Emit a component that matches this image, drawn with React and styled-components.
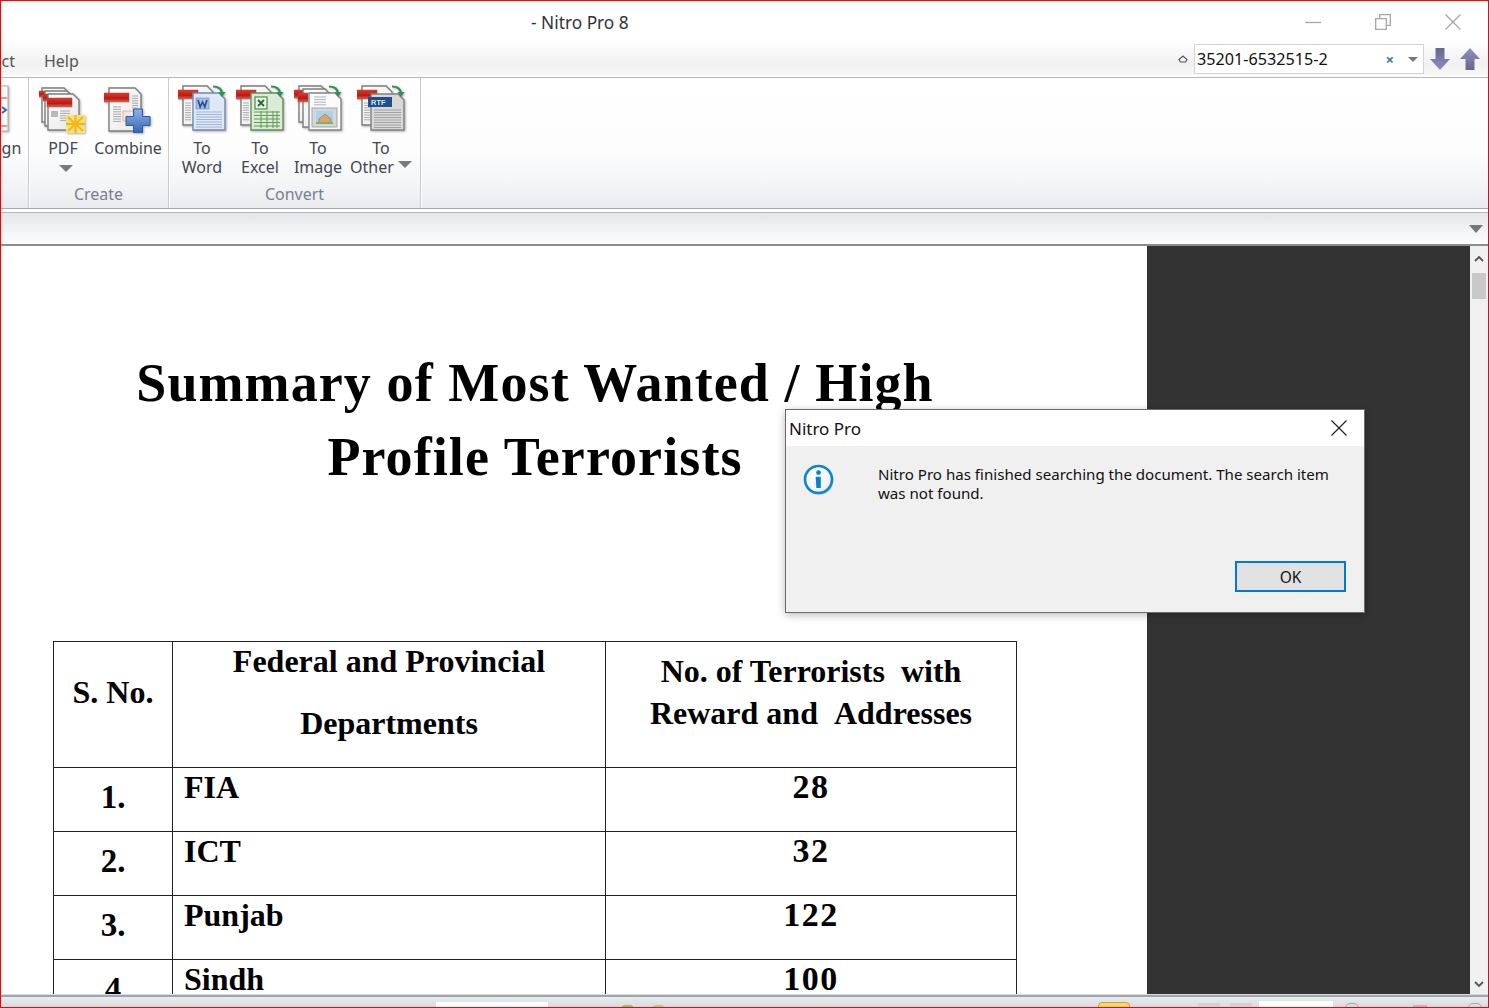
import React from 'react'
import styled, { createGlobalStyle } from 'styled-components'

const GlobalStyle = createGlobalStyle`
  html, body { margin: 0; padding: 0; background: #fff; overflow: hidden; }
  * { box-sizing: border-box; }
`

const UI_FONT = `"Noto Sans", "Open Sans", sans-serif`
const DOC_FONT = `"Liberation Serif", "Times New Roman", serif`

const Window = styled.div`
  width: 1489px;
  height: 1008px;
  border: 1px solid #f00;
  position: relative;
  overflow: hidden;
  display: flex;
  flex-direction: column;
  background: #fff;
  font-family: ${UI_FONT};
`

const Header = styled.div`
  height: 77px;
  flex: none;
  display: flex;
  flex-direction: column;
  border-bottom: 1px solid #b4b8bb;
  background: linear-gradient(#fff 0, #fff 38px, #f1f1f1 62px, #f6f6f6 72px, #fdfdfd 100%);
`

const TitleBar = styled.div`
  height: 42px;
  flex: none;
  display: flex;
  align-items: center;
  justify-content: space-between;
`

const TitleText = styled.div`
  margin-left: 530px;
  font-size: 17.3px;
  color: #333;
`

const WindowButtons = styled.div`
  display: flex;
  align-items: center;
  gap: 54px;
  padding-right: 27px;
  height: 100%;
`

const TabRow = styled.div`
  flex: 1;
  display: flex;
  align-items: center;
  justify-content: space-between;
`

const Tabs = styled.div`
  display: flex;
  align-items: center;
  gap: 29px;
  margin-left: -40px;
  padding-top: 2px;
`

const Tab = styled.span`
  font-size: 16px;
  color: #555;
`

const SearchArea = styled.div`
  display: flex;
  align-items: center;
  padding: 0 8px 2px 0;
  height: 100%;
`

const SearchBox = styled.div`
  width: 230px;
  height: 30px;
  margin: 0 6px 0 6px;
  background: #fff;
  border: 1px solid #d2d4d6;
  display: flex;
  align-items: center;
  padding: 0 5px 0 2px;
  font-size: 16.2px;
  color: #111;
`

const SearchValue = styled.span`
  flex: 1;
`

const ClearMark = styled.span`
  color: #3c78a8;
  font-size: 15px;
  font-weight: 700;
  margin-right: 14px;
  line-height: 1;
`

const FindArrows = styled.div`
  display: flex;
  gap: 10px;
`

const Ribbon = styled.div`
  height: 131px;
  flex: none;
  display: flex;
  border-bottom: 1px solid #a3a8ac;
  background: linear-gradient(#fff 0, #fdfdfd 70px, #f4f5f7 105px, #e9ebef 100%);
`

const RibbonGroup = styled.div`
  width: ${p => p.$width}px;
  flex: none;
  display: flex;
  flex-direction: column;
  align-items: center;
  border-right: 1px solid #c8ccd2;
  box-shadow: 1px 0 0 #fff;
  padding-top: 2px;
  overflow: hidden;
`

const GroupButtons = styled.div`
  flex: 1;
  align-self: stretch;
  display: flex;
  justify-content: ${p => p.$end ? 'flex-end' : 'flex-start'};
  padding-left: ${p => p.$inset || 0}px;
  padding-right: ${p => p.$end ? 5 : 0}px;
`

const GroupLabel = styled.div`
  height: 26px;
  font-size: 16px;
  line-height: 24px;
  color: #76818f;
`

const ToolButton = styled.div`
  width: ${p => p.$width}px;
  flex: none;
  display: flex;
  flex-direction: column;
  align-items: center;
`

const IconSlot = styled.div`
  height: 53px;
  display: flex;
  align-items: flex-end;
  margin-bottom: 6px;
  align-self: ${p => p.$clipped ? 'flex-end' : 'auto'};
  margin-right: ${p => p.$clipped ? 14 : 0}px;
`

const ToolLabel = styled.div`
  font-size: 16px;
  line-height: 19px;
  color: #3f4650;
  text-align: center;
  white-space: nowrap;
`

const DownArrow = styled.span`
  display: ${p => p.$block ? 'block' : 'inline-block'};
  flex: none;
  width: 0;
  height: 0;
  border-left: ${p => p.$size || 7}px solid transparent;
  border-right: ${p => p.$size || 7}px solid transparent;
  border-top: ${p => p.$size || 7}px solid #7a7a7a;
  margin: ${p => p.$block ? '7px 0 0 6px' : p.$size ? '0' : '0 0 5px 4px'};
`

const SubBar = styled.div`
  flex: none;
  height: 34px;
  margin-top: 3px;
  border-top: 1px solid #b4b8bc;
  border-bottom: 2px solid #8a8c8e;
  background: linear-gradient(#e3e6ea, #fdfdfd);
  display: flex;
  align-items: center;
  justify-content: flex-end;
  padding-right: 5px;
`

const SubArrow = styled.span`
  width: 0;
  height: 0;
  border-left: 7px solid transparent;
  border-right: 7px solid transparent;
  border-top: 8px solid #777;
`

const Workspace = styled.div`
  flex: 1;
  min-height: 0;
  display: flex;
  border-bottom: 1px solid #dcdcdc;
`

const PageArea = styled.div`
  width: 1146px;
  flex: none;
  overflow: hidden;
  padding-top: 100px;
  color: #000;
  font-family: ${DOC_FONT};
  font-weight: 700;
`

const Heading = styled.h1`
  margin: 0;
  width: 1068px;
  text-align: center;
  font-size: 54px;
  line-height: 74px;
  letter-spacing: 1.1px;
  font-weight: 700;
`

const SummaryTable = styled.div`
  margin: 147px 0 0 52px;
  width: 964px;
  display: grid;
  grid-template-columns: 119px 433px 411px;
  grid-template-rows: 126px repeat(4, 64px);
  border-top: 1px solid #222;
  border-left: 1px solid #222;
`

const Cell = styled.div`
  border-right: 1px solid #222;
  border-bottom: 1px solid #222;
  font-size: ${p => p.$size || 32}px;
  line-height: ${p => p.$line || 36}px;
  letter-spacing: ${p => p.$spacing || 0}px;
  padding-top: ${p => p.$top || 0}px;
  padding-left: ${p => p.$left || 0}px;
  text-align: ${p => p.$left ? 'left' : 'center'};
`

const HeaderLine = styled.div`
  margin-bottom: ${p => p.$gap || 0}px;
`

const DarkGutter = styled.div`
  flex: 1;
  background: #333;
`

const ScrollTrack = styled.div`
  width: 18px;
  flex: none;
  background: #f0f0f0;
  display: flex;
  flex-direction: column;
  align-items: center;
  justify-content: space-between;
  padding: 9px 0 6px;
`

const ScrollThumb = styled.div`
  width: 14px;
  height: 26px;
  margin-top: 11px;
  background: #c9c9c9;
`

const ScrollTop = styled.div`
  display: flex;
  flex-direction: column;
  align-items: center;
`

const StatusBar = styled.div`
  flex: none;
  height: 12px;
  border-top: 2px solid #9fa6ab;
  background: linear-gradient(#e9ebee, #d8dbe0);
  display: flex;
  align-items: flex-start;
  overflow: hidden;
`

const StatusBox = styled.div`
  width: ${p => p.$width}px;
  height: 10px;
  margin-top: ${p => p.$top || 0}px;
  margin-left: ${p => p.$left}px;
  background: ${p => p.$bg || '#fff'};
  border: 1px solid ${p => p.$edge || '#fff'};
  border-radius: ${p => p.$radius || 0}px;
  flex: none;
`

const Dialog = styled.div`
  position: absolute;
  left: 784px;
  top: 408px;
  width: 580px;
  height: 204px;
  border: 1px solid #6a6a6a;
  background: #f0f0f0;
  box-shadow: 0 2px 8px rgba(0, 0, 0, 0.28);
  display: flex;
  flex-direction: column;
  z-index: 2;
`

const DialogTitle = styled.div`
  height: 36px;
  flex: none;
  background: #fff;
  display: flex;
  align-items: center;
  justify-content: space-between;
  padding: 0 17px 0 3px;
  font-size: 17px;
  color: #111;
`

const DialogBody = styled.div`
  flex: 1;
  display: flex;
  padding: 18px 0 0 17px;
`

const DialogText = styled.div`
  width: 462px;
  margin: 1px 0 0 43px;
  font-size: 15.1px;
  line-height: 19px;
  color: #111;
`

const DialogFooter = styled.div`
  display: flex;
  justify-content: flex-end;
  padding: 0 18px 20px 0;
`

const OkButton = styled.button`
  width: 111px;
  height: 31px;
  background: #e1e1e1;
  border: 2px solid #0078d7;
  padding: 0;
  font-family: ${UI_FONT};
  font-size: 15.5px;
  color: #111;
`

const IconSvg = styled.svg`
  display: block;
  flex: none;
  filter: blur(0.35px) drop-shadow(1px 1px 1px rgba(0, 0, 0, 0.3));
`

const Defs = () => (
  <defs>
    <linearGradient id="redTab" x1="0" y1="0" x2="0" y2="1">
      <stop offset="0" stopColor="#e0392c" />
      <stop offset="0.6" stopColor="#b81a10" />
      <stop offset="1" stopColor="#d9695e" />
    </linearGradient>
    <linearGradient id="sheet" x1="0" y1="0" x2="1" y2="1">
      <stop offset="0" stopColor="#fff" />
      <stop offset="1" stopColor="#e6e6e6" />
    </linearGradient>
    <linearGradient id="plus" x1="0" y1="0" x2="0" y2="1">
      <stop offset="0" stopColor="#8fb2e6" />
      <stop offset="1" stopColor="#3266b4" />
    </linearGradient>
  </defs>
)

// a sheet with a folded top right corner
const Sheet = ({ x, y, w, h, fill = 'url(#sheet)', stroke = '#7d7d7d', width = 1.4 }) => (
  <path
    d={`M${x} ${y}h${w - 6}l6 6v${h - 6}h${-w}z`}
    fill={fill}
    stroke={stroke}
    strokeWidth={width}
  />
)

const Lines = ({ x, y, w, n, gap = 2.4, color = '#a9a9a9' }) => (
  <g stroke={color} strokeWidth="1">
    {Array.from({ length: n }, (_, i) => (
      <line key={i} x1={x} x2={x + w} y1={y + i * gap} y2={y + i * gap} />
    ))}
  </g>
)

const RedTab = ({ x, y, w, h = 8 }) => (
  <rect x={x} y={y} width={w} height={h} fill="url(#redTab)" stroke="#a8433a" strokeWidth="0.5" />
)

const GreenArrow = () => (
  <g>
    <path d="M35 1.5q8 0 9 6.5" fill="none" stroke="#2e8f5a" strokeWidth="2.2" />
    <path d="M40.5 7h7l-3.5 5z" fill="#2e8f5a" />
  </g>
)

const BackStack = () => (
  <g>
    <Sheet x={5} y={1} w={30} h={39} />
    <Lines x={7} y={18} w={6} n={8} />
    <RedTab x={0} y={5} w={20} h={9} />
  </g>
)

const IconFrame = ({ children }) => (
  <IconSvg width={48} height={48} viewBox="0 0 48 48">
    <Defs />
    {children}
  </IconSvg>
)

const PdfIcon = () => (
  <IconFrame>
    <Sheet x={3} y={3} w={28} h={34} />
    <RedTab x={0} y={6} w={9} h={6} />
    <Sheet x={6} y={6} w={28} h={35} />
    <RedTab x={4} y={9} w={10} h={7} />
    <Sheet x={9} y={9} w={31} h={36} />
    <RedTab x={8} y={13} w={25} h={9} />
    <rect x={12} y={26} width={7} height={6} fill="#b8b8b8" />
    <Lines x={21} y={26} w={10} n={5} />
    <rect x={27} y={30} width={19} height={18} fill="#f6e27a" />
    <g stroke="#f3b61f" strokeWidth="2.2">
      <line x1="36.5" y1="30" x2="36.5" y2="48" />
      <line x1="27" y1="39" x2="46" y2="39" />
      <line x1="29" y1="32" x2="44" y2="46" />
      <line x1="44" y1="32" x2="29" y2="46" />
    </g>
  </IconFrame>
)

const CombineIcon = () => (
  <IconFrame>
    <Sheet x={5} y={3} w={32} h={43} />
    <RedTab x={0} y={8} w={25} h={9} />
    <Lines x={28} y={11} w={6} n={6} />
    <Lines x={9} y={22} w={8} n={7} />
    <rect x={19} y={26} width={13} height={10} fill="#f3e6e2" stroke="#d8a9a0" strokeWidth="0.8" />
    <path
      d="M29.5 24h9v7.5H46v9h-7.5V48h-9v-7.5H22v-9h7.5z"
      fill="url(#plus)"
      stroke="#2b5a9f"
      strokeWidth="1"
    />
  </IconFrame>
)

const WordIcon = () => (
  <IconFrame>
    <BackStack />
    <Sheet x={15} y={8} w={32} h={37} fill="#dfe8f6" stroke="#7389ad" />
    <Lines x={18} y={27} w={26} n={7} gap={2.5} color="#9fb4d6" />
    <rect x={18} y={13} width={13} height={11} fill="#a8bfe2" stroke="#5f7fb5" strokeWidth="0.6" />
    <path d="M20 15l2.2 7 2.3-5 2.3 5 2.2-7" fill="none" stroke="#1f4e9e" strokeWidth="1.7" />
    <GreenArrow />
  </IconFrame>
)

const ExcelIcon = () => (
  <IconFrame>
    <BackStack />
    <Sheet x={15} y={8} w={32} h={37} fill="#dcebd6" stroke="#5f8f58" />
    <rect x={19} y={12} width={12} height={12} fill="#eef5ea" stroke="#4d8a48" strokeWidth="1.2" />
    <path d="M22 15l6 6M28 15l-6 6" stroke="#1e6b2e" strokeWidth="1.8" />
    <g stroke="#5d9a56" strokeWidth="1">
      <path d="M18 27h26M18 30.5h26M18 34h26M18 37.5h26M18 41h26" />
      <path d="M25 26v17M31 26v17M37 26v17M41 26v17" />
    </g>
    <GreenArrow />
  </IconFrame>
)

const ImageIcon = () => (
  <IconFrame>
    <Sheet x={5} y={1} w={28} h={36} />
    <RedTab x={0} y={5} w={9} h={8} />
    <Sheet x={9} y={4} w={28} h={38} />
    <RedTab x={4} y={8} w={10} h={9} />
    <Sheet x={15} y={8} w={32} h={37} fill="#fafafa" stroke="#858585" />
    <Lines x={20} y={12} w={12} n={4} gap={2.6} color="#a8b4c6" />
    <rect x={18} y={23} width={25} height={19} fill="#d2d7dc" stroke="#a5a5a5" strokeWidth="1" />
    <rect x={22} y={26} width={17} height={13} fill="#a9d3ea" />
    <path d="M25 34l6-5 6 5v4h-12z" fill="#d9a56b" stroke="#8a6a44" strokeWidth="0.6" />
    <path d="M22 39h17v-2h-17z" fill="#7fb06a" />
    <GreenArrow />
  </IconFrame>
)

const OtherIcon = () => (
  <IconFrame>
    <BackStack />
    <Sheet x={14} y={9} w={33} h={36} fill="#d8d8d8" stroke="#808080" />
    <Lines x={17} y={25} w={27} n={8} gap={2.5} color="#a2a2a2" />
    <rect x={11} y={12} width={24} height={10} fill="#1f4f8f" />
    <text x={14} y={20} fontSize="7.5" fontWeight="700" fill="#dfe8f5" fontFamily="Liberation Sans, sans-serif">RTF</text>
    <GreenArrow />
  </IconFrame>
)

const PartialIcon = () => (
  <IconSvg width={8} height={48} viewBox="0 0 8 48">
    <rect x="-10" y="1" width="17" height="45" fill="#fafafa" stroke="#aaa" />
    <path d="M1 22l4 3-4 3" stroke="#2a6db5" strokeWidth="2" fill="none" />
    <path d="M0 13h6" stroke="#c33" strokeWidth="1" />
    <path d="M0 41h6" stroke="#c33" strokeWidth="1" />
  </IconSvg>
)

const LineIcon = styled.svg.attrs(p => ({
  width: p.$w,
  height: p.$h,
  viewBox: `0 0 ${p.$w} ${p.$h}`,
  fill: 'none',
}))`
  display: block;
  flex: none;
  stroke: ${p => p.$stroke || '#a6a6a6'};
  stroke-width: ${p => p.$sw || 1.3};
`

const FindSvg = styled.svg`
  display: block;
  flex: none;
  transform: ${p => p.$up ? 'none' : 'scaleY(-1)'};
`

const FindArrow = ({ up }) => (
  <FindSvg $up={up} width={20} height={22} viewBox="0 0 20 22">
    <defs>
      <linearGradient id="findArrow" x1="0" y1="0" x2="0" y2="1">
        <stop offset="0" stopColor="#8f8fc0" />
        <stop offset="1" stopColor="#6a6590" />
      </linearGradient>
    </defs>
    <path d="M10 0L20 11H14.5V22H5.5V11H0z" fill="url(#findArrow)" />
  </FindSvg>
)

const InfoSvg = styled.svg`
  display: block;
  flex: none;
`

const InfoIcon = () => (
  <InfoSvg width={32} height={32} viewBox="0 0 32 32">
    <defs>
      <radialGradient id="infoFill" cx="0.4" cy="0.3" r="0.8">
        <stop offset="0" stopColor="#fff" />
        <stop offset="0.7" stopColor="#eef6fc" />
        <stop offset="1" stopColor="#bcdcf2" />
      </radialGradient>
    </defs>
    <circle cx="16" cy="16.5" r="14.5" fill="#9a9a9a" opacity="0.35" />
    <circle cx="15.5" cy="15.5" r="13.5" fill="url(#infoFill)" stroke="#0f84c8" strokeWidth="2.6" />
    <circle cx="15.5" cy="8.6" r="2.4" fill="#0f7fc4" />
    <path d="M12.6 12.8h5.2v11.2h-4.4z" fill="#0f7fc4" />
  </InfoSvg>
)

const rows = [
  ['1.', 'FIA', '28'],
  ['2.', 'ICT', '32'],
  ['3.', 'Punjab', '122'],
  ['4', 'Sindh', '100'],
]

const App = () => {
  return (
    <>
      <GlobalStyle />
      <Window>
        <Header>
          <TitleBar>
            <TitleText>- Nitro Pro 8</TitleText>
            <WindowButtons>
              <LineIcon $w={16} $h={16}><path d="M0 8.5h16" /></LineIcon>
              <LineIcon $w={16} $h={16}>
                <path d="M.7 4.7h10.6v10.6H.7z" />
                <path d="M4.7 4.7V.7h10.6v10.6h-4" />
              </LineIcon>
              <LineIcon $w={16} $h={16}><path d="M.5.5l15 15M15.5.5l-15 15" /></LineIcon>
            </WindowButtons>
          </TitleBar>
          <TabRow>
            <Tabs>
              <Tab>Protect</Tab>
              <Tab>Help</Tab>
            </Tabs>
            <SearchArea>
              <LineIcon $w={10} $h={8} $stroke="#555" $sw={1.1}>
                <path d="M1 4.5L5 1l4 3.5L7.5 7h-5z" />
              </LineIcon>
              <SearchBox>
                <SearchValue>35201-6532515-2</SearchValue>
                <ClearMark>×</ClearMark>
                <DownArrow $size={5} />
              </SearchBox>
              <FindArrows>
                <FindArrow />
                <FindArrow up />
              </FindArrows>
            </SearchArea>
          </TabRow>
        </Header>

        <Ribbon>
          <RibbonGroup $width={28}>
            <GroupButtons $end>
              <ToolButton $width={36}>
                <IconSlot $clipped><PartialIcon /></IconSlot>
                <ToolLabel>Sign</ToolLabel>
              </ToolButton>
            </GroupButtons>
          </RibbonGroup>
          <RibbonGroup $width={140}>
            <GroupButtons $inset={4}>
              <ToolButton $width={60}>
                <IconSlot><PdfIcon /></IconSlot>
                <ToolLabel>PDF</ToolLabel>
                <DownArrow $block />
              </ToolButton>
              <ToolButton $width={70}>
                <IconSlot><CombineIcon /></IconSlot>
                <ToolLabel>Combine</ToolLabel>
              </ToolButton>
            </GroupButtons>
            <GroupLabel>Create</GroupLabel>
          </RibbonGroup>
          <RibbonGroup $width={252}>
            <GroupButtons $inset={4}>
              <ToolButton $width={58}>
                <IconSlot><WordIcon /></IconSlot>
                <ToolLabel>To<br />Word</ToolLabel>
              </ToolButton>
              <ToolButton $width={58}>
                <IconSlot><ExcelIcon /></IconSlot>
                <ToolLabel>To<br />Excel</ToolLabel>
              </ToolButton>
              <ToolButton $width={58}>
                <IconSlot><ImageIcon /></IconSlot>
                <ToolLabel>To<br />Image</ToolLabel>
              </ToolButton>
              <ToolButton $width={68}>
                <IconSlot><OtherIcon /></IconSlot>
                <ToolLabel>To<br />Other<DownArrow /></ToolLabel>
              </ToolButton>
            </GroupButtons>
            <GroupLabel>Convert</GroupLabel>
          </RibbonGroup>
        </Ribbon>

        <SubBar><SubArrow /></SubBar>

        <Workspace>
          <PageArea>
            <Heading>Summary of Most Wanted / High<br />Profile Terrorists</Heading>
            <SummaryTable>
              <Cell $top={32}>S. No.</Cell>
              <Cell $top={1}>
                <HeaderLine $gap={26}>Federal and Provincial</HeaderLine>
                <HeaderLine>Departments</HeaderLine>
              </Cell>
              <Cell $line={42} $top={8}>No. of Terrorists &nbsp;with<br />Reward and &nbsp;Addresses</Cell>
              {rows.map(([num, dept, count]) => (
                <React.Fragment key={num}>
                  <Cell $top={11} $size={33}>{num}</Cell>
                  <Cell $top={1} $left={11}>{dept}</Cell>
                  <Cell $top={1} $size={34} $spacing={1.5}>{count}</Cell>
                </React.Fragment>
              ))}
            </SummaryTable>
          </PageArea>
          <DarkGutter />
          <ScrollTrack>
            <ScrollTop>
              <LineIcon $w={10} $h={7} $stroke="#555" $sw={1.8}><path d="M1 6l4-4 4 4" /></LineIcon>
              <ScrollThumb />
            </ScrollTop>
            <LineIcon $w={10} $h={7} $stroke="#555" $sw={1.8}><path d="M1 1l4 4 4-4" /></LineIcon>
          </ScrollTrack>
        </Workspace>

        <StatusBar>
          <StatusBox $width={112} $left={435} $top={5} />
          <StatusBox $width={15} $left={72} $top={8} $bg="#8fbf6a" $edge="#8fbf6a" $radius={7} />
          <StatusBox $width={15} $left={16} $top={8} $bg="#a9cf90" $edge="#a9cf90" $radius={7} />
          <StatusBox $width={32} $left={432} $top={5} $bg="#fbd66a" $edge="#c9a040" $radius={4} />
          <StatusBox $width={22} $left={68} $top={6} $bg="#d0d3d7" $edge="#d0d3d7" />
          <StatusBox $width={22} $left={10} $top={6} $bg="#d0d3d7" $edge="#d0d3d7" />
          <StatusBox $width={74} $left={7} $top={4} />
          <StatusBox $width={14} $left={12} $top={6} $bg="transparent" $edge="#a8a8a8" $radius={7} />
          <StatusBox $width={14} $left={54} $top={8} $bg="#b4b8bc" $edge="#b4b8bc" />
          <StatusBox $width={14} $left={41} $top={6} $bg="transparent" $edge="#a8a8a8" $radius={7} />
        </StatusBar>

        <Dialog>
          <DialogTitle>
            Nitro Pro
            <LineIcon $w={16} $h={16} $stroke="#222" $sw={1.2}><path d="M.5.5l15 15M15.5.5l-15 15" /></LineIcon>
          </DialogTitle>
          <DialogBody>
            <InfoIcon />
            <DialogText>Nitro Pro has finished searching the document. The search item was not found.</DialogText>
          </DialogBody>
          <DialogFooter><OkButton>OK</OkButton></DialogFooter>
        </Dialog>
      </Window>
    </>
  )
}

export default App
